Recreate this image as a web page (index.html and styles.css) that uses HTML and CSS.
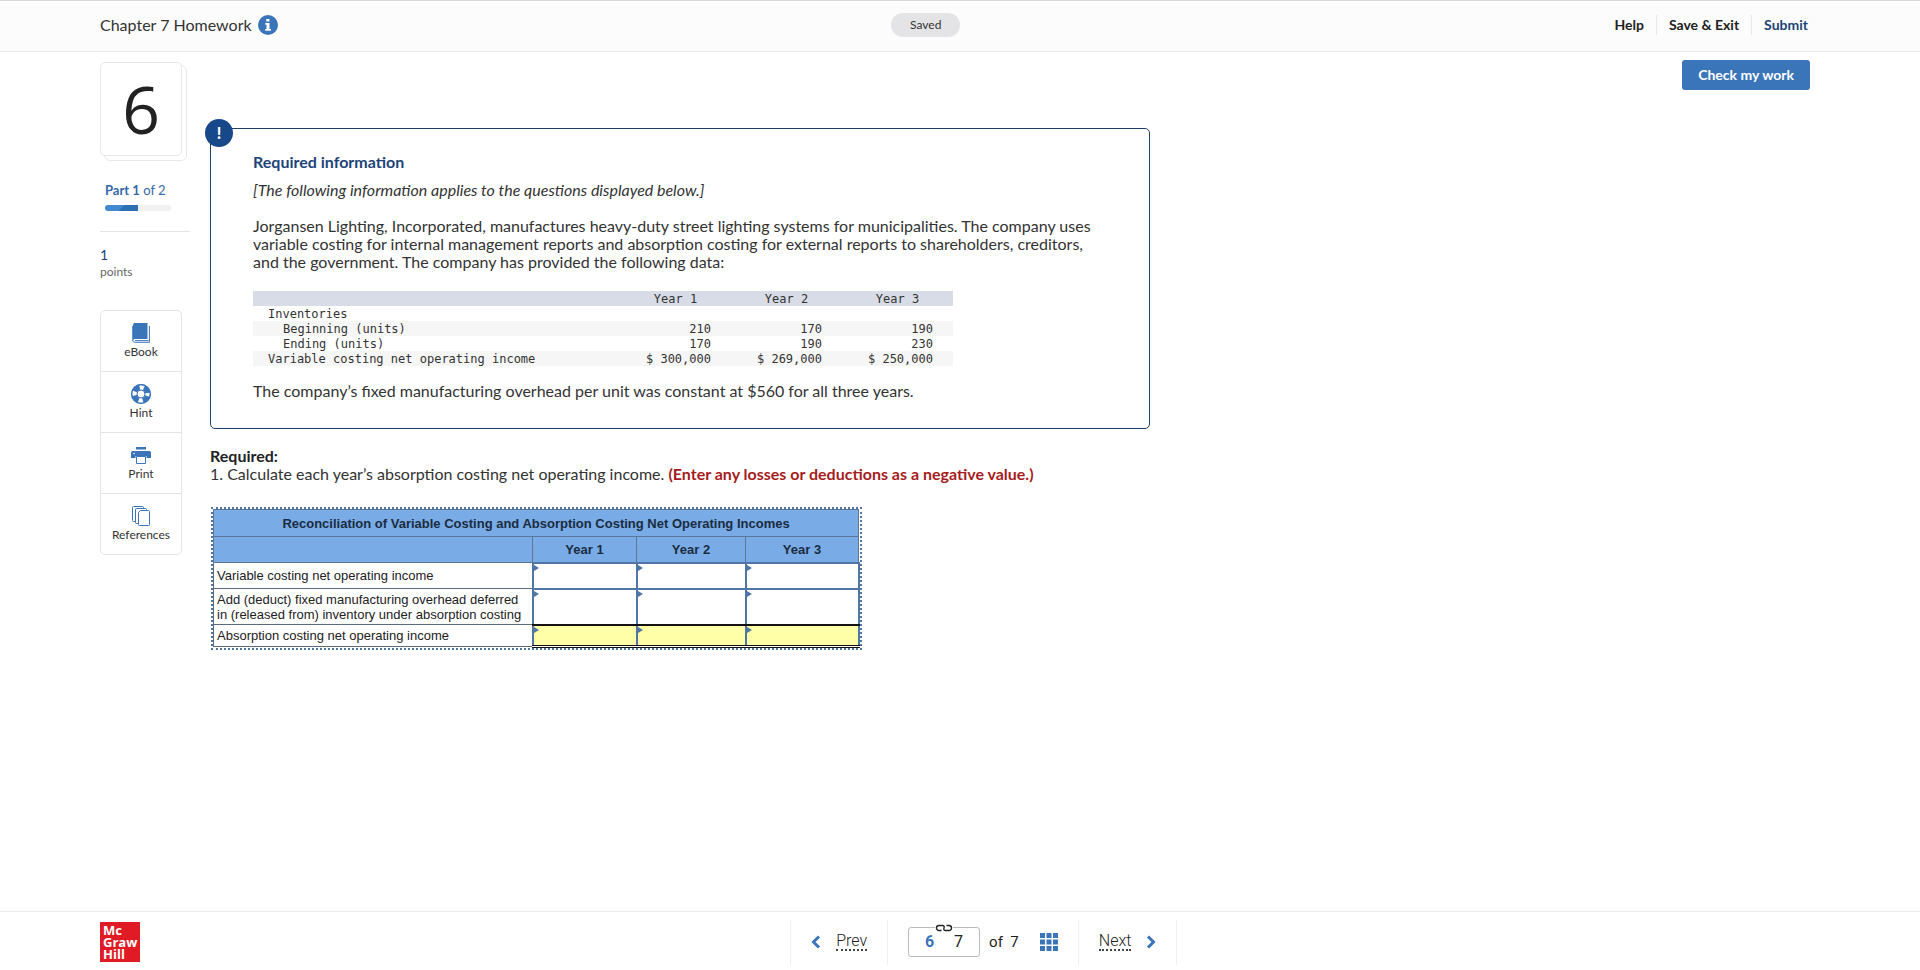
FILE: index.html
```html
<!DOCTYPE html>
<html lang="en">
<head>
<meta charset="utf-8">
<title>Chapter 7 Homework</title>
<link rel="stylesheet" href="styles.css">
</head>
<body>
<header class="topbar">
  <div class="topbar-title">
    <h1>Chapter 7 Homework</h1>
    <button class="info-button" type="button" aria-label="Assignment information">
      <svg viewBox="0 0 20 20" width="20" height="20"><circle cx="10" cy="10" r="10" fill="#3a75b9"/><path d="M8.3 4h3.1v2.5H8.3zM7.3 8h4.2v6H13v1.8H7.2V14h1.3V9.7H7.3z" fill="#fff"/></svg>
    </button>
  </div>
  <span class="saved">Saved</span>
  <nav class="topbar-links">
    <a href="#">Help</a>
    <a href="#">Save &amp; Exit</a>
    <a href="#" class="submit">Submit</a>
  </nav>
</header>

<main class="page">
  <aside class="side">
    <div class="number-card">6</div>
    <div class="part">
      <div class="part-label"><b>Part 1</b> of 2</div>
      <div class="bar"><div class="bar-fill"></div></div>
    </div>
    <div class="points"><span class="points-value">1</span><span class="points-unit">points</span></div>
    <div class="tools">
      <button type="button">
        <svg viewBox="0 0 18 20" width="18" height="20"><path d="M3 0h12.500v16H3a2 2 0 0 0-2 1V2a2 2 0 0 1 2-2z" fill="#3a75b9"/><path d="M17.400 3v16.300H3.200C1.500 19.300.700 18.500.700 17V3M3 17.600h13.500" fill="none" stroke="#3a75b9" stroke-width="1"/></svg>
        eBook
      </button>
      <button type="button">
        <svg viewBox="0 0 20 20" width="20" height="20"><circle cx="10" cy="10" r="7" fill="none" stroke="#3a75b9" stroke-width="6"/><circle cx="10" cy="10" r="6.500" fill="none" stroke="#fff" stroke-width="4.800" stroke-dasharray="4.200 6.010" stroke-dashoffset="2.100"/><circle cx="10" cy="10" r="9.300" fill="none" stroke="#3a75b9" stroke-width="1.200"/><circle cx="10" cy="10" r="4" fill="#fff" stroke="#3a75b9" stroke-width="1"/></svg>
        Hint
      </button>
      <button type="button">
        <svg viewBox="0 0 20 20" width="20" height="20"><path d="M5 2h10v2.500H5zM1.500 6h17A1.500 1.500 0 0 1 20 7.500V13h-4.500v-2h-11v2H0V7.500A1.500 1.500 0 0 1 1.500 6z" fill="#3a75b9"/><path d="M5.500 11.500h9v7h-9z" fill="#fff" stroke="#3a75b9"/><circle cx="3" cy="8.500" r=".8" fill="#fff"/></svg>
        Print
      </button>
      <button type="button">
        <svg viewBox="0 0 18 20" width="18" height="20" fill="#fff" stroke="#3a75b9"><path d="M3.500 15.500H1.500a1 1 0 0 1-1-1v-13a1 1 0 0 1 1-1h9a1 1 0 0 1 1 1v1"/><path d="M6 17.500H4.500a1 1 0 0 1-1-1v-13a1 1 0 0 1 1-1h9a1 1 0 0 1 1 1v1"/><path d="M8.500 4.500h8a1 1 0 0 1 1 1v13a1 1 0 0 1-1 1h-9a1 1 0 0 1-1-1v-12z"/></svg>
        References
      </button>
    </div>
  </aside>

  <section class="question">
    <div class="info-box">
      <span class="alert-badge" aria-hidden="true">!</span>
      <h2>Required information</h2>
      <p class="applies">[The following information applies to the questions displayed below.]</p>
      <p class="story">Jorgansen Lighting, Incorporated, manufactures heavy-duty street lighting systems for municipalities. The company uses<br>variable costing for internal management reports and absorption costing for external reports to shareholders, creditors,<br>and the government. The company has provided the following data:</p>
      <table class="data">
        <thead><tr><th class="label"></th><th>Year 1</th><th>Year 2</th><th>Year 3</th></tr></thead>
        <tbody>
          <tr><td>Inventories</td><td></td><td></td><td></td></tr>
          <tr><td class="indent">Beginning (units)</td><td>210</td><td>170</td><td>190</td></tr>
          <tr><td class="indent">Ending (units)</td><td>170</td><td>190</td><td>230</td></tr>
          <tr><td>Variable costing net operating income</td><td>$ 300,000</td><td>$ 269,000</td><td>$ 250,000</td></tr>
        </tbody>
      </table>
      <p>The company’s fixed manufacturing overhead per unit was constant at $560 for all three years.</p>
    </div>

    <p class="task"><b>Required:</b><br>1. Calculate each year’s absorption costing net operating income. <b class="note">(Enter any losses or deductions as a negative value.)</b></p>

    <div class="sheet-frame">
      <table class="sheet">
        <colgroup><col class="c-label"><col class="c-y1"><col class="c-y2"><col class="c-y3"></colgroup>
        <thead>
          <tr class="r-title"><th colspan="4">Reconciliation of Variable Costing and Absorption Costing Net Operating Incomes</th></tr>
          <tr class="r-years"><th></th><th>Year 1</th><th>Year 2</th><th>Year 3</th></tr>
        </thead>
        <tbody>
          <tr class="r-line">
            <td>Variable costing net operating income</td>
            <td class="entry"><input type="text" aria-label="Variable costing income, Year 1"></td>
            <td class="entry"><input type="text" aria-label="Variable costing income, Year 2"></td>
            <td class="entry"><input type="text" aria-label="Variable costing income, Year 3"></td>
          </tr>
          <tr class="r-tall">
            <td>Add (deduct) fixed manufacturing overhead deferred<br>in (released from) inventory under absorption costing</td>
            <td class="entry"><input type="text" aria-label="Overhead deferred, Year 1"></td>
            <td class="entry"><input type="text" aria-label="Overhead deferred, Year 2"></td>
            <td class="entry"><input type="text" aria-label="Overhead deferred, Year 3"></td>
          </tr>
          <tr class="r-total">
            <td>Absorption costing net operating income</td>
            <td class="entry"><input type="text" aria-label="Absorption costing income, Year 1"></td>
            <td class="entry"><input type="text" aria-label="Absorption costing income, Year 2"></td>
            <td class="entry"><input type="text" aria-label="Absorption costing income, Year 3"></td>
          </tr>
        </tbody>
      </table>
    </div>
  </section>

  <button class="check" type="button">Check my work</button>
</main>

<footer class="footer">
  <div class="logo"><span>Mc</span><span>Graw</span><span>Hill</span></div>
  <nav class="pager">
    <a class="step" href="#"><svg viewBox="0 0 10 14" width="10" height="14"><path d="M8 1.500L2.500 7 8 12.500" fill="none" stroke="#3a75b9" stroke-width="3"/></svg><span>Prev</span></a>
    <div class="pages">
      <div class="linked">
        <svg class="chain" viewBox="0 0 18 8" width="18" height="8"><rect width="18" height="8" fill="#fff"/><path d="M6.500 6.500H4a2.500 2.500 0 0 1 0-5h3.500c1.500 0 2 1 1.500 2.500s0 2.500 1.500 2.500H14a2.500 2.500 0 0 0 0-5h-2.500" fill="none" stroke="#222" stroke-width="1.400"/></svg>
        <b>6</b><span>7</span>
      </div>
      <span class="of">of&nbsp; 7</span>
      <button class="grid-button" type="button" aria-label="Question list">
        <svg viewBox="0 0 18 18" width="18" height="18" fill="#3a75b9"><path d="M0 0h5v5H0zM6.500 0h5v5h-5zM13 0h5v5h-5zM0 6.500h5v5H0zM6.500 6.500h5v5h-5zM13 6.500h5v5h-5zM0 13h5v5H0zM6.500 13h5v5h-5zM13 13h5v5h-5z"/></svg>
      </button>
    </div>
    <a class="step" href="#"><span>Next</span><svg viewBox="0 0 10 14" width="10" height="14"><path d="M2 1.500L7.500 7 2 12.500" fill="none" stroke="#3a75b9" stroke-width="3"/></svg></a>
  </nav>
</footer>
</body>
</html>
```

FILE: styles.css
```css
* { box-sizing: border-box; }

body {
  margin: 0;
  min-height: 100vh;
  display: flex;
  flex-direction: column;
  background: #fff;
  color: #333;
  font: 16px/18px Lato, sans-serif;
}

h1, h2, p { margin: 0; }
a { color: inherit; text-decoration: none; }
button { font: inherit; color: inherit; cursor: pointer; }

/* Top bar */
.topbar {
  display: grid;
  grid-template-columns: 14fr auto 15fr;
  align-items: center;
  height: 52px;
  padding: 0 112px 2px 100px;
  border-top: 1px solid #d8d8dc;
  border-bottom: 1px solid #e8e8e8;
  background: #fcfcfc;
}
.topbar-title { display: flex; align-items: center; gap: 6px; }
.topbar-title h1 { font-size: 16px; font-weight: 400; }
.info-button { display: flex; padding: 0; border: 0; background: none; }
.saved {
  padding: 3px 19px;
  border-radius: 12px;
  background: #e4e3e6;
  font-size: 12px;
}
.topbar-links { display: flex; justify-content: flex-end; font-size: 14px; font-weight: 700; color: #222; }
.topbar-links a { padding: 0 12px; border-left: 1px solid #e8e8e8; line-height: 20px; }
.topbar-links a:first-child { border-left: 0; }
.topbar-links a:last-child { padding-right: 0; }
.topbar-links .submit { color: #1d4478; }

/* Page columns */
.page {
  flex: 1;
  display: grid;
  grid-template-columns: 90px minmax(0, 940px) 1fr;
  column-gap: 20px;
  align-items: start;
  padding: 0 110px 0 100px;
}

/* Left column */
.side { padding-top: 10px; }
.number-card {
  position: relative;
  width: 82px;
  height: 94px;
  border: 1px solid #e8e8e8;
  border-radius: 5px;
  background: #fff;
  color: #222;
  font: 66px/90px "Open Sans", sans-serif;
  text-align: center;
}
.number-card::after {
  content: "";
  position: absolute;
  inset: 2px -6px -6px 3px;
  z-index: -1;
  border: 1px solid #e8e8e8;
  border-radius: 6px;
}
.part { padding: 25px 0 20px 5px; border-bottom: 1px solid #e4e4e4; color: #3568a8; font-size: 13px; }
.bar { width: 66px; height: 6px; margin-top: 6px; border-radius: 3px; background: #f0f0f0; overflow: hidden; }
.bar-fill { width: 50%; height: 100%; background: linear-gradient(135deg, #4389d0 50%, #2f6fb5 50%); }
.points { display: grid; padding-top: 14px; font-size: 12px; line-height: 17px; color: #666; }
.points-value { color: #1d4478; font-size: 14px; }
.tools { display: grid; width: 82px; margin-top: 30px; border: 1px solid #e4e4e4; border-radius: 5px; }
.tools button {
  display: flex;
  flex-direction: column;
  align-items: center;
  height: 61px;
  padding: 12px 0 0;
  border: 0;
  border-top: 1px solid #e4e4e4;
  background: none;
  font-size: 12px;
}
.tools button:first-child { height: 60px; border-top: 0; }

/* Information box */
.question { padding-top: 76px; }
.info-box {
  position: relative;
  padding: 24px 42px 28px;
  border: 1px solid #1d4067;
  border-radius: 5px;
}
.alert-badge {
  position: absolute;
  top: -10px;
  left: -6px;
  width: 28px;
  height: 28px;
  border-radius: 50%;
  background: #17488a;
  color: #fff;
  font-weight: 900;
  line-height: 28px;
  text-align: center;
}
.info-box h2 { margin-bottom: 10px; color: #1d4478; font-size: 16px; }
.applies { margin-bottom: 18px; font-style: italic; }

.data {
  width: 700px;
  margin: 20px 0 16px;
  border-collapse: collapse;
  table-layout: fixed;
  font: 12px/14px "DejaVu Sans Mono", monospace;
}
.data th { width: 111px; height: 15px; padding: 1px 0 0; background: #d7dce6; font-weight: 400; }
.data .label { width: 367px; }
.data td { height: 15px; padding: 1px 20px 0 0; text-align: right; }
.data td:first-child { padding: 1px 0 0 15px; text-align: left; }
.data td.indent:first-child { padding-left: 30px; }
.data tbody tr:nth-child(even) { background: #f6f6f6; }

/* Task and answer sheet */
.task { margin-top: 18px; }
.task b { color: #222; }
.task .note { color: #a61c1c; }
.sheet-frame { width: max-content; margin: 24px 0 0 1px; border: 2px dotted #4f76a5; }
.sheet {
  width: 645px;
  border-collapse: collapse;
  table-layout: fixed;
  color: #222;
  font: 13px/15px "Liberation Sans", Arial, sans-serif;
}
.c-label { width: 319px; }
.c-y1 { width: 104px; }
.c-y2 { width: 109px; }
.c-y3 { width: 113px; }
.sheet th { padding: 0; border: 1px solid #5b7795; background: #79ace6; color: #1b2b40; }
.sheet td { padding: 0 3px; border: 1px solid #5b6b80; }
.r-title { height: 27px; }
.r-years, .r-line { height: 26px; }
.r-tall { height: 36px; }
.r-total { height: 22px; }
.sheet .entry { position: relative; padding: 0; border: 2px solid #4f76a5; }
.entry::before {
  content: "";
  position: absolute;
  top: 1px;
  left: 0;
  border: 3px solid transparent;
  border-left: 5px solid #4f76a5;
  border-right: 0;
}
.entry input { display: block; width: 100%; height: 18px; padding: 0 6px; border: 0; background: none; font: inherit; text-align: right; }
.sheet .r-tall .entry { border-bottom-color: #111; }
.sheet .r-total .entry { border-top-color: #111; border-bottom: 3px double #111; background: #ffffa8; }

/* Check button */
.check {
  justify-self: end;
  margin-top: 8px;
  padding: 6px 16px;
  border: 0;
  border-radius: 3px;
  background: #3a75b9;
  color: #fff;
  font-size: 14px;
  font-weight: 700;
}

/* Footer */
.footer {
  display: grid;
  grid-template-columns: 12fr auto 11fr;
  align-items: center;
  height: 59px;
  padding: 2px 110px 0 100px;
  border-top: 1px solid #ebebeb;
}
.logo {
  display: grid;
  align-content: center;
  width: 40px;
  height: 40px;
  padding: 0 3px;
  background: #e11b25;
  color: #fff;
  font: 700 13px/12px "Open Sans", sans-serif;
}
.pager { display: flex; align-items: center; font-family: Roboto, sans-serif; color: #222; font-weight: 300; }
.step {
  display: flex;
  align-items: center;
  gap: 15px;
  height: 45px;
  padding: 0 20px;
  border: solid #f0f0f0;
  border-width: 0 1px;
}
.step span { border-bottom: 2px dotted #444; line-height: 16px; }
.pages { display: flex; align-items: center; padding: 0 20px; }
.linked {
  position: relative;
  display: flex;
  justify-content: space-between;
  width: 72px;
  padding: 5px 16px;
  border: 1px solid #bbb;
  border-radius: 3px;
}
.linked b { color: #3a75b9; font-weight: 700; }
.linked span, .of { font-weight: 400; }
.chain { position: absolute; top: -4px; left: 26px; }
.of { margin: 0 21px 0 9px; font-size: 15px; }
.grid-button { display: flex; padding: 0; border: 0; background: none; }
```
